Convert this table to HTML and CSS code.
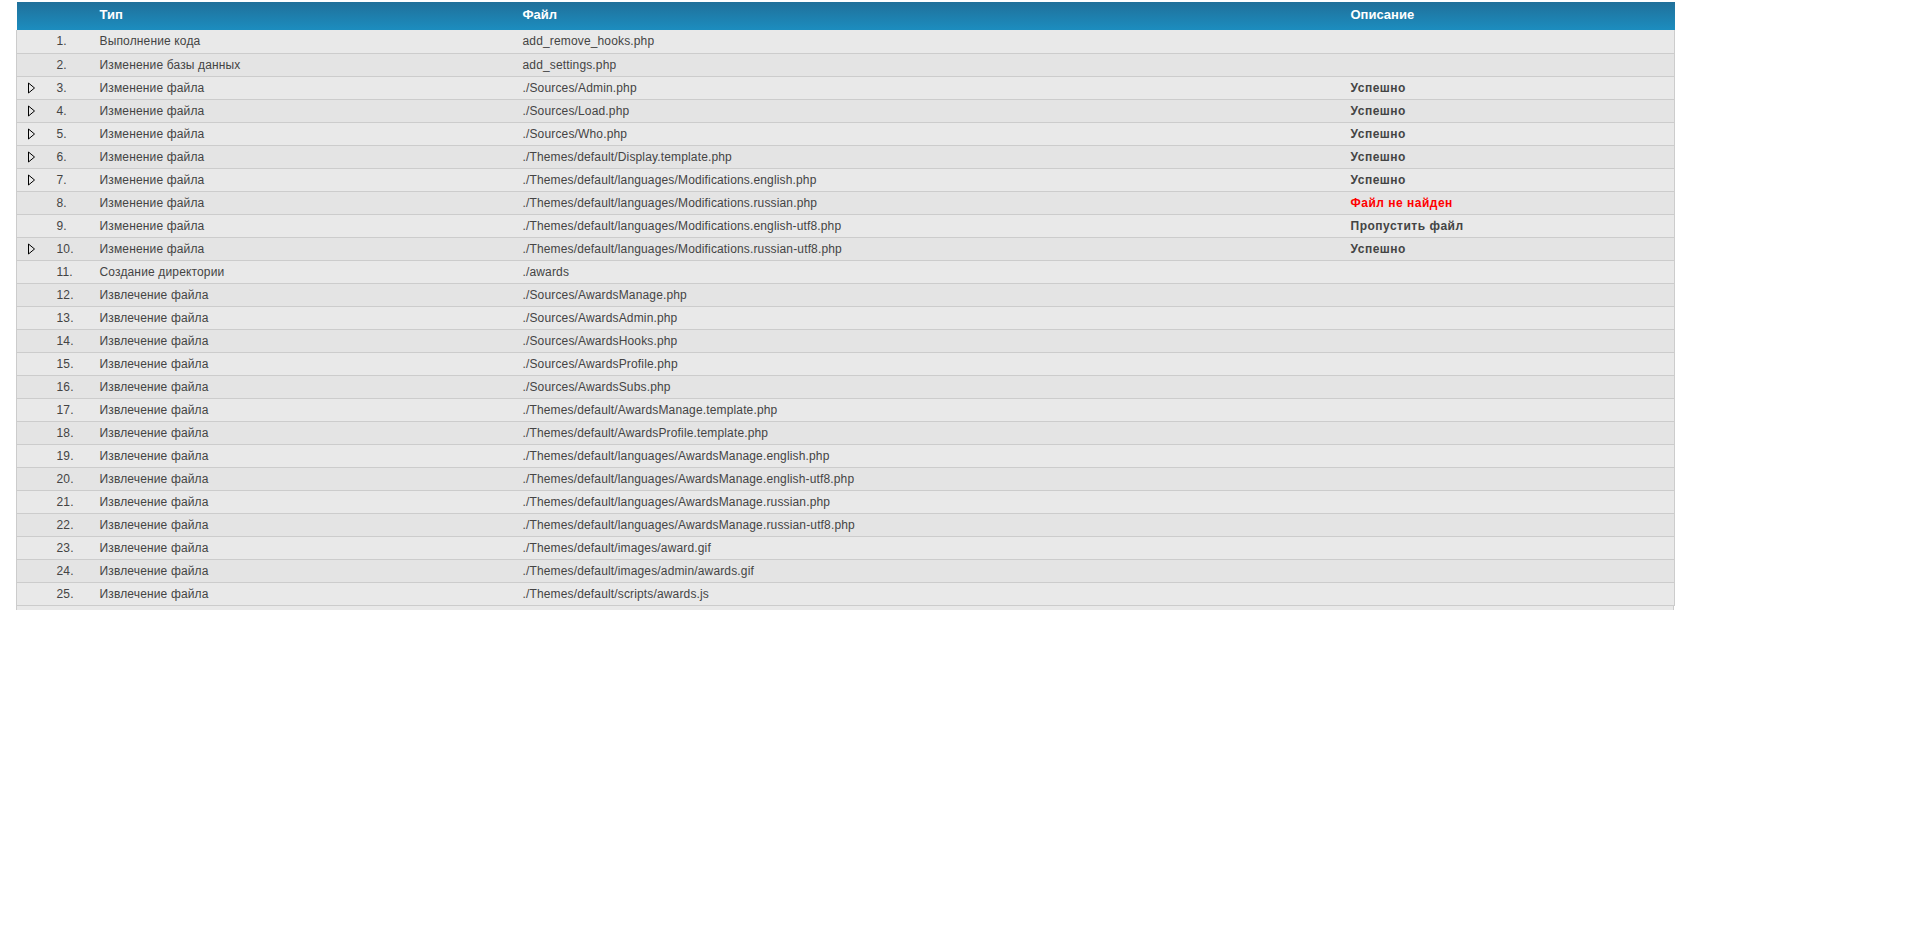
FILE: index.html
```html
<!DOCTYPE html>
<html lang="ru">
<head>
<meta charset="utf-8">
<title>Список действий</title>
<link rel="stylesheet" href="styles.css">
</head>
<body>
<div class="wrap">
<table class="actions">
<colgroup>
<col class="c-icon"><col class="c-num"><col class="c-type"><col class="c-file"><col class="c-desc">
</colgroup>
<thead>
<tr><th></th><th></th><th>Тип</th><th>Файл</th><th>Описание</th></tr>
</thead>
<tbody>
<tr class="odd"><td></td><td>1.</td><td>Выполнение кода</td><td>add_remove_hooks.php</td><td></td></tr>
<tr class="even"><td></td><td>2.</td><td>Изменение базы данных</td><td>add_settings.php</td><td></td></tr>
<tr class="odd"><td><svg class="tri" width="9" height="12" viewBox="0 0 9 12"><path d="M1.5 1 L7.5 6 L1.5 11 Z" fill="none" stroke="#000000" stroke-width="1"/></svg></td><td>3.</td><td>Изменение файла</td><td>./Sources/Admin.php</td><td class="st">Успешно</td></tr>
<tr class="even"><td><svg class="tri" width="9" height="12" viewBox="0 0 9 12"><path d="M1.5 1 L7.5 6 L1.5 11 Z" fill="none" stroke="#000000" stroke-width="1"/></svg></td><td>4.</td><td>Изменение файла</td><td>./Sources/Load.php</td><td class="st">Успешно</td></tr>
<tr class="odd"><td><svg class="tri" width="9" height="12" viewBox="0 0 9 12"><path d="M1.5 1 L7.5 6 L1.5 11 Z" fill="none" stroke="#000000" stroke-width="1"/></svg></td><td>5.</td><td>Изменение файла</td><td>./Sources/Who.php</td><td class="st">Успешно</td></tr>
<tr class="even"><td><svg class="tri" width="9" height="12" viewBox="0 0 9 12"><path d="M1.5 1 L7.5 6 L1.5 11 Z" fill="none" stroke="#000000" stroke-width="1"/></svg></td><td>6.</td><td>Изменение файла</td><td>./Themes/default/Display.template.php</td><td class="st">Успешно</td></tr>
<tr class="odd"><td><svg class="tri" width="9" height="12" viewBox="0 0 9 12"><path d="M1.5 1 L7.5 6 L1.5 11 Z" fill="none" stroke="#000000" stroke-width="1"/></svg></td><td>7.</td><td>Изменение файла</td><td>./Themes/default/languages/Modifications.english.php</td><td class="st">Успешно</td></tr>
<tr class="even"><td></td><td>8.</td><td>Изменение файла</td><td>./Themes/default/languages/Modifications.russian.php</td><td class="st err">Файл не найден</td></tr>
<tr class="odd"><td></td><td>9.</td><td>Изменение файла</td><td>./Themes/default/languages/Modifications.english-utf8.php</td><td class="st">Пропустить файл</td></tr>
<tr class="even"><td><svg class="tri" width="9" height="12" viewBox="0 0 9 12"><path d="M1.5 1 L7.5 6 L1.5 11 Z" fill="none" stroke="#000000" stroke-width="1"/></svg></td><td>10.</td><td>Изменение файла</td><td>./Themes/default/languages/Modifications.russian-utf8.php</td><td class="st">Успешно</td></tr>
<tr class="odd"><td></td><td>11.</td><td>Создание директории</td><td>./awards</td><td></td></tr>
<tr class="even"><td></td><td>12.</td><td>Извлечение файла</td><td>./Sources/AwardsManage.php</td><td></td></tr>
<tr class="odd"><td></td><td>13.</td><td>Извлечение файла</td><td>./Sources/AwardsAdmin.php</td><td></td></tr>
<tr class="even"><td></td><td>14.</td><td>Извлечение файла</td><td>./Sources/AwardsHooks.php</td><td></td></tr>
<tr class="odd"><td></td><td>15.</td><td>Извлечение файла</td><td>./Sources/AwardsProfile.php</td><td></td></tr>
<tr class="even"><td></td><td>16.</td><td>Извлечение файла</td><td>./Sources/AwardsSubs.php</td><td></td></tr>
<tr class="odd"><td></td><td>17.</td><td>Извлечение файла</td><td>./Themes/default/AwardsManage.template.php</td><td></td></tr>
<tr class="even"><td></td><td>18.</td><td>Извлечение файла</td><td>./Themes/default/AwardsProfile.template.php</td><td></td></tr>
<tr class="odd"><td></td><td>19.</td><td>Извлечение файла</td><td>./Themes/default/languages/AwardsManage.english.php</td><td></td></tr>
<tr class="even"><td></td><td>20.</td><td>Извлечение файла</td><td>./Themes/default/languages/AwardsManage.english-utf8.php</td><td></td></tr>
<tr class="odd"><td></td><td>21.</td><td>Извлечение файла</td><td>./Themes/default/languages/AwardsManage.russian.php</td><td></td></tr>
<tr class="even"><td></td><td>22.</td><td>Извлечение файла</td><td>./Themes/default/languages/AwardsManage.russian-utf8.php</td><td></td></tr>
<tr class="odd"><td></td><td>23.</td><td>Извлечение файла</td><td>./Themes/default/images/award.gif</td><td></td></tr>
<tr class="even"><td></td><td>24.</td><td>Извлечение файла</td><td>./Themes/default/images/admin/awards.gif</td><td></td></tr>
<tr class="odd"><td></td><td>25.</td><td>Извлечение файла</td><td>./Themes/default/scripts/awards.js</td><td></td></tr>
</tbody>
</table>
<div class="foot"></div>
</div>
</body>
</html>
```
FILE: styles.css
```css
html, body {
  margin: 0;
  padding: 0;
  background: #ffffff;
}
body {
  font-family: "Liberation Sans", Arial, sans-serif;
  font-size: 12px;
  color: #444444;
}
.wrap {
  width: 1658px;
  margin: 2px 0 0 16px;
}
.actions {
  width: 1658px;
  border-collapse: collapse;
  table-layout: fixed;
}
.c-icon { width: 36px; }
.c-num { width: 43px; }
.c-type { width: 423px; }
.c-file { width: 828px; }
.c-desc { width: 328px; }
.actions thead tr {
  background: linear-gradient(to bottom, #20709a 0%, #1c8dbf 100%);
}
.actions th {
  height: 28px;
  padding: 0 4px 3px 4px;
  text-align: left;
  font-size: 13px;
  font-weight: bold;
  color: #ffffff;
  vertical-align: middle;
  box-sizing: border-box;
}
.actions td {
  height: 23px;
  padding: 0 4px;
  box-sizing: border-box;
  border-bottom: 1px solid #cccccc;
  vertical-align: middle;
  white-space: nowrap;
  letter-spacing: 0.15px;
}
.actions tbody tr td:first-child {
  border-left: 1px solid #cccccc;
  padding-left: 10px;
  line-height: 0;
}
.actions tbody tr td:last-child { border-right: 1px solid #cccccc; }
.odd { background: #e9e9e9; }
.even { background: #e4e4e4; }
.actions td.st {
  font-weight: bold;
  letter-spacing: 0.5px;
}
.err { color: #ff0000; }
.tri {
  display: block;
}
.foot {
  height: 4px;
  background: #e9e9e9;
  border-left: 1px solid #cccccc;
  border-right: 1px solid #cccccc;
}
```
